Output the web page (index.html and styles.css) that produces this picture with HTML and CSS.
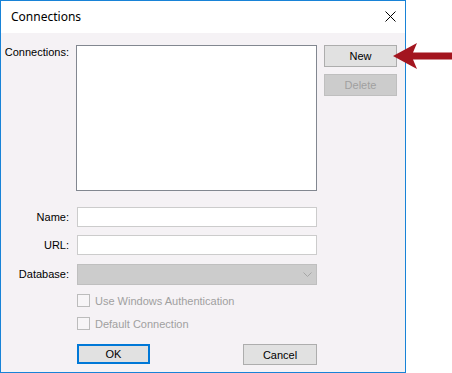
FILE: index.html
```html
<!DOCTYPE html>
<html lang="en">
<head>
    <meta charset="UTF-8">
    <title>Connections</title>
    <link rel="stylesheet" href="styles.css">
</head>
<body>
    <div class="dialog">
        <div class="titlebar">
            <span class="title">Connections</span>
            <svg class="close" width="11" height="11" viewBox="0 0 11 11">
                <path d="M0.5 0.5 L10.5 10.5 M10.5 0.5 L0.5 10.5" stroke="#000" stroke-width="1" fill="none"/>
            </svg>
        </div>
        <div class="content">
            <div class="top-row">
                <label class="label label-top">Connections:</label>
                <div class="listbox"></div>
                <div class="side-buttons">
                    <button class="btn">New</button>
                    <button class="btn btn-disabled">Delete</button>
                </div>
            </div>
            <div class="field-row first">
                <label class="label">Name:</label>
                <div class="textbox"></div>
            </div>
            <div class="field-row">
                <label class="label">URL:</label>
                <div class="textbox"></div>
            </div>
            <div class="field-row db">
                <label class="label">Database:</label>
                <div class="combo">
                    <svg width="9" height="5" viewBox="0 0 9 5">
                        <path d="M0.5 0.5 L4.5 4.5 L8.5 0.5" stroke="#a6a6a6" stroke-width="1" fill="none"/>
                    </svg>
                </div>
            </div>
            <div class="check-row first-check">
                <span class="checkbox"></span>
                <span class="check-text">Use Windows Authentication</span>
            </div>
            <div class="check-row">
                <span class="checkbox"></span>
                <span class="check-text">Default Connection</span>
            </div>
            <div class="button-row">
                <button class="btn btn-default">OK</button>
                <button class="btn btn-cancel">Cancel</button>
            </div>
        </div>
    </div>
    <!-- annotation arrow pointing at the New button -->
    <svg class="arrow" width="60" height="28" viewBox="392 42 60 28">
        <path d="M393 56 L417 43 L413 52.5 L452 52.5 L452 59.5 L413 59.5 L417 69 Z" fill="#a3151f"/>
    </svg>
</body>
</html>
```

FILE: styles.css
```css
body {
    margin: 0;
    background-color: #fff;
    font-family: 'Liberation Sans', Arial, sans-serif;
    font-size: 11px;
    color: #000;
    position: relative;
}
.dialog {
    box-sizing: border-box;
    width: 406px;
    height: 373px;
    border: 1px solid #1883d7;
    background-color: #f5f2f5;
}
.titlebar {
    height: 32px;
    background-color: #fff;
    display: flex;
    align-items: center;
    justify-content: space-between;
    padding: 0 9px 0 10px;
}
.title {
    font-family: 'Noto Sans', sans-serif;
    font-size: 12px;
    margin-top: -1px;
}
.close {
    display: block;
    margin-top: -2px;
}
.content {
    padding-top: 12px;
}
.label {
    width: 68px;
    text-align: right;
    flex-shrink: 0;
}
.label-top {
    line-height: 13px;
    margin-top: 1px;
}
.top-row {
    display: flex;
    align-items: flex-start;
}
.listbox {
    box-sizing: border-box;
    width: 241px;
    height: 146px;
    margin-left: 7px;
    background-color: #fff;
    border: 1px solid #828790;
}
.side-buttons {
    display: flex;
    flex-direction: column;
    gap: 7px;
    margin-left: 7px;
    width: 73px;
}
.btn {
    box-sizing: border-box;
    font-family: 'Liberation Sans', Arial, sans-serif;
    font-size: 11px;
    color: #000;
    background-color: #e1e1e1;
    border: 1px solid #adadad;
    height: 22px;
    width: 73px;
    padding: 0;
    margin: 0;
}
.btn-disabled {
    background-color: #cccccc;
    border-color: #bfbfbf;
    color: #a0a0a0;
}
.field-row {
    display: flex;
    align-items: center;
    height: 20px;
    margin-top: 8px;
}
.field-row.first {
    margin-top: 16px;
}
.field-row.db {
    margin-top: 9px;
}
.textbox {
    box-sizing: border-box;
    width: 240px;
    height: 20px;
    margin-left: 8px;
    background-color: #fff;
    border: 1px solid #cccccc;
}
.combo {
    box-sizing: border-box;
    width: 240px;
    height: 21px;
    margin-left: 8px;
    background-color: #cccccc;
    border: 1px solid #bfbfbf;
    display: flex;
    align-items: center;
    justify-content: flex-end;
    padding-right: 4px;
}
.check-row {
    display: flex;
    align-items: center;
    height: 13px;
    margin-top: 10px;
    padding-left: 76px;
}
.check-row.first-check {
    margin-top: 10px;
}
.checkbox {
    box-sizing: border-box;
    width: 13px;
    height: 13px;
    border: 1px solid #bcbcbc;
    background-color: #f7f5f7;
}
.check-text {
    margin-left: 5px;
    color: #a0a0a0;
}
.button-row {
    display: flex;
    justify-content: space-between;
    width: 240px;
    margin: 14px 0 0 76px;
}
.btn-default {
    border: 2px solid #0078d7;
    height: 20px;
}
.btn-cancel {
    width: 74px;
    height: 21px;
}
.arrow {
    position: absolute;
    left: 392px;
    top: 42px;
}
```
